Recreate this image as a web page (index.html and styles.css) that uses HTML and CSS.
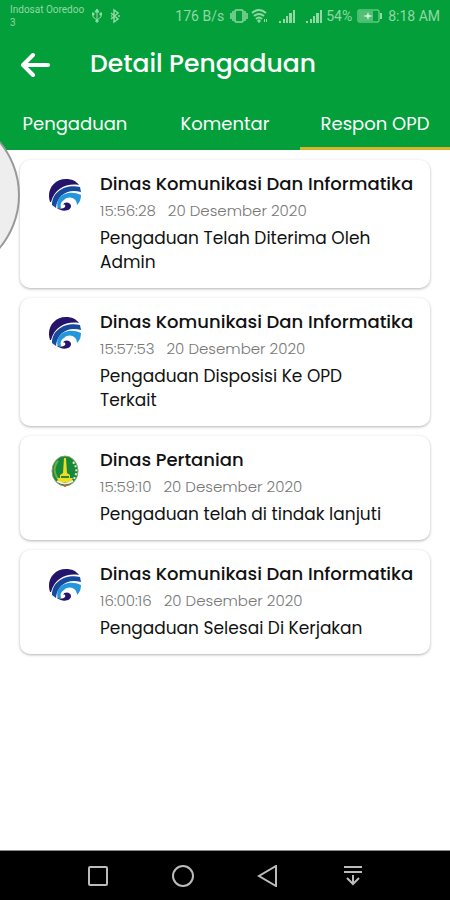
FILE: index.html
```
<!DOCTYPE html>
<html lang="id">
<head>
    <meta charset="UTF-8">
    <meta name="viewport" content="width=device-width, initial-scale=1.0">
    <title>Detail Pengaduan</title>
    <link rel="stylesheet" href="styles.css">
</head>
<body>
    <!-- Shared logos -->
    <svg class="defs" width="0" height="0" aria-hidden="true">
        <symbol id="kominfo" viewBox="0 0 34 34">
            <path fill="#24146b" d="M2 24C-2 12 6 1 18 1c6 0 10 2 13 6C19 5 7 10 3 24z"/>
            <path fill="#174a9c" d="M4 27C4 14 17 6 32 9l1 5C20 10 9 17 8 30z"/>
            <path fill="#2497dc" d="M10 31C6 18 20 11 33 17c0 4-1 7-4 10 0-7-8-10-13-5-3 2-4 4-3 8z"/>
            <path fill="#24146b" d="M8 29c3 2 7 2 9 0 1-2-1-3-2-2 1-4 8-3 8 1 0 5-9 7-15 1z"/>
        </symbol>
        <symbol id="pertanian" viewBox="0 0 34 34">
            <ellipse cx="17" cy="17" rx="13" ry="15" fill="#16883a" stroke="#8d9f71"/>
            <path fill="none" stroke="#e4efd9" stroke-width="2" stroke-dasharray="2 2" d="M25 8c5 6 4 14-1 19"/>
            <path fill="none" stroke="#69ad45" stroke-width="2" d="M10 7c-5 6-4 13 0 18"/>
            <path fill="#efdc24" d="M16 4h2l1 15 3 2v3h3l-2 4H11l-2-4h3v-3l3-2z"/>
            <path fill="#34862d" d="M13 22h8v2h-8z"/>
            <path fill="none" stroke="#f6eed2" stroke-width="2" d="M9 27q8 5 16 0"/>
            <path fill="#d94935" d="M14 31h6l-3 2z"/>
        </symbol>
        <symbol id="signal" viewBox="0 0 17 15">
            <path fill="currentColor" d="M0 12h2v2H0zM4 10h2v4H4zM7 7h2v7H7zM10 4h3v10h-3zM14 1h2v13h-2z"/>
        </symbol>
    </svg>

    <header class="header">
        <div class="status-bar">
            <div class="status-left">
                <span class="carrier">Indosat Ooredoo<br>3</span>
                <svg width="10" height="16" viewBox="0 0 10 16" fill="none" stroke="currentColor">
                    <path d="M5 2v12M1 6v3l4 3 4-3V6"/>
                    <path fill="currentColor" d="M3 4l2-3 2 3zM0 5h2v2H0zM8 5h2v2H8zM4 12h2v2H4z"/>
                </svg>
                <svg width="10" height="16" viewBox="0 0 10 16" fill="none" stroke="currentColor" stroke-width="1.5">
                    <path d="M1 5l7 6-4 3V2l4 3-7 6M1 8h1M8 8h2"/>
                </svg>
            </div>
            <div class="status-right">
                <span class="speed">176 B/s</span>
                <svg width="18" height="16" viewBox="0 0 18 16" fill="none" stroke="currentColor" stroke-width="1.5">
                    <rect x="5" y="2" width="8" height="12" rx="1"/>
                    <path d="M1 5v6M3 3v10M15 3v10M17 5v6"/>
                </svg>
                <svg width="18" height="16" viewBox="0 0 18 16" fill="none" stroke="currentColor" stroke-width="2">
                    <path d="M1 5q7-6 14 0M3 8q5-4 10 0M5 11q3-3 6 0"/>
                    <path fill="currentColor" stroke="none" d="M6 13l2-2 2 2-2 2zM13 11h1v3h-1zM15 11h1v3h-1z"/>
                </svg>
                <svg class="signal" width="17" height="15"><use href="#signal"/></svg>
                <svg class="signal" width="17" height="15"><use href="#signal"/></svg>
                <span class="percent">54%</span>
                <svg class="battery" width="26" height="14" viewBox="0 0 26 14">
                    <rect x="1" y="1" width="21" height="12" rx="1" fill="none" stroke="currentColor"/>
                    <path fill="currentColor" opacity=".55" d="M2 2h14v10H2z"/>
                    <path fill="currentColor" d="M23 4h2v6h-2z"/>
                    <path fill="#d5f5dc" d="M11 3l1 3 4 1-4 1-1 3-1-3-4-1 4-1z"/>
                </svg>
                <span>8:18 AM</span>
            </div>
        </div>

        <div class="app-bar">
            <button class="back-button" type="button" aria-label="Kembali">
                <svg width="30" height="26" viewBox="0 0 30 26" fill="none" stroke="#fff" stroke-width="4" stroke-linecap="round" stroke-linejoin="round">
                    <path d="M13 4L3 14l10 10M4 14h24"/>
                </svg>
            </button>
            <h1>Detail Pengaduan</h1>
        </div>

        <nav class="tabs">
            <a href="#pengaduan">Pengaduan</a>
            <a href="#komentar">Komentar</a>
            <a href="#respon" class="active">Respon OPD</a>
        </nav>
    </header>

    <main class="responses" id="respon">
        <article class="card">
            <svg class="logo"><use href="#kominfo"/></svg>
            <div class="card-body">
                <h2>Dinas Komunikasi Dan Informatika</h2>
                <p class="date"><span>15:56:28</span><span>20 Desember 2020</span></p>
                <p class="message">Pengaduan Telah Diterima Oleh Admin</p>
            </div>
        </article>
        <article class="card">
            <svg class="logo"><use href="#kominfo"/></svg>
            <div class="card-body">
                <h2>Dinas Komunikasi Dan Informatika</h2>
                <p class="date"><span>15:57:53</span><span>20 Desember 2020</span></p>
                <p class="message">Pengaduan Disposisi Ke OPD Terkait</p>
            </div>
        </article>
        <article class="card">
            <svg class="logo"><use href="#pertanian"/></svg>
            <div class="card-body">
                <h2>Dinas Pertanian</h2>
                <p class="date"><span>15:59:10</span><span>20 Desember 2020</span></p>
                <p class="message">Pengaduan telah di tindak lanjuti</p>
            </div>
        </article>
        <article class="card">
            <svg class="logo"><use href="#kominfo"/></svg>
            <div class="card-body">
                <h2>Dinas Komunikasi Dan Informatika</h2>
                <p class="date"><span>16:00:16</span><span>20 Desember 2020</span></p>
                <p class="message">Pengaduan Selesai Di Kerjakan</p>
            </div>
        </article>
    </main>

    <!-- Floating assistive button, mostly off the screen -->
    <button class="floating-button" type="button" aria-label="Menu"></button>

    <footer class="nav-bar">
        <button type="button" aria-label="Aplikasi terbaru">
            <svg width="22" height="22" viewBox="0 0 22 22"><rect x="2" y="2" width="18" height="18" rx="1"/></svg>
        </button>
        <button type="button" aria-label="Beranda">
            <svg width="22" height="22" viewBox="0 0 22 22"><circle cx="11" cy="11" r="10"/></svg>
        </button>
        <button type="button" aria-label="Kembali">
            <svg width="22" height="22" viewBox="0 0 22 22"><path d="M19 1v20L2 11z"/></svg>
        </button>
        <button type="button" aria-label="Turunkan notifikasi">
            <svg width="22" height="22" viewBox="0 0 22 22"><path d="M2 2h18M2 7h18M11 10v9M5 13l6 6 6-6"/></svg>
        </button>
    </footer>
</body>
</html>
```
FILE: styles.css
```
* {
    box-sizing: border-box;
}

body {
    font-family: Poppins, Inter, sans-serif;
    background-color: #fff;
    color: #111;
    margin: 0;
    min-height: 100vh;
    display: flex;
    flex-direction: column;
    position: relative;
    overflow-x: hidden;
}

h1, h2, p {
    margin: 0;
}

button {
    background: none;
    border: none;
    padding: 0;
    cursor: pointer;
}

svg {
    display: block;
    flex-shrink: 0;
}

.defs {
    position: absolute;
}

/* Header */
.header {
    background-color: #039f3b;
    color: #fff;
}

.status-bar {
    display: flex;
    justify-content: space-between;
    align-items: center;
    height: 32px;
    padding: 0 10px;
    font-family: Roboto, sans-serif;
    font-size: 14px;
    color: #91d8a4;
    white-space: nowrap;
}

.status-left,
.status-right {
    display: flex;
    align-items: center;
}

.status-left {
    gap: 8px;
}

.carrier {
    font-size: 10px;
    line-height: 13px;
}

.speed {
    margin-right: 3px;
}

.status-right {
    gap: 3px;
}

.signal {
    margin-left: 7px;
}

.battery {
    margin: 0 2px;
}

.app-bar {
    display: flex;
    align-items: center;
    gap: 40px;
    height: 64px;
    padding: 0 20px;
}

.app-bar h1 {
    font-size: 25px;
    font-weight: 500;
    line-height: 32px;
}

.tabs {
    display: flex;
    height: 54px;
}

.tabs a {
    flex: 1;
    display: flex;
    align-items: center;
    justify-content: center;
    padding-top: 4px;
    border-bottom: 3px solid transparent;
    color: #fff;
    font-size: 18px;
    text-decoration: none;
}

.tabs .active {
    border-bottom-color: #d9b52b;
}

/* Response cards */
.responses {
    flex: 1;
    display: flex;
    flex-direction: column;
    gap: 10px;
    padding: 10px 20px;
}

.card {
    display: flex;
    gap: 18px;
    padding: 10px 30px 14px 28px;
    border-radius: 10px;
    background-color: #fff;
    box-shadow: 0 1px 3px rgba(0, 0, 0, 0.3);
}

.logo {
    width: 34px;
    height: 34px;
    margin-top: 8px;
}

.card-body {
    flex: 1;
    min-width: 0;
}

.card h2 {
    font-size: 18px;
    font-weight: 500;
    line-height: 28px;
    white-space: nowrap;
}

.date {
    display: flex;
    gap: 12px;
    margin-bottom: 2px;
    color: #777;
    font-size: 15px;
    font-weight: 300;
    line-height: 26px;
}

.message {
    font-size: 17px;
    line-height: 24px;
}

.floating-button {
    position: absolute;
    top: 112px;
    left: -146px;
    width: 166px;
    height: 166px;
    border: 2px solid #999;
    border-radius: 50%;
    background-color: #eee;
}

/* Android navigation bar */
.nav-bar {
    display: flex;
    justify-content: center;
    align-items: center;
    gap: 63px;
    height: 50px;
    border-top: 1px solid #888;
    background-color: #000;
}

.nav-bar svg {
    fill: none;
    stroke: #bbb;
    stroke-width: 2;
}
```
